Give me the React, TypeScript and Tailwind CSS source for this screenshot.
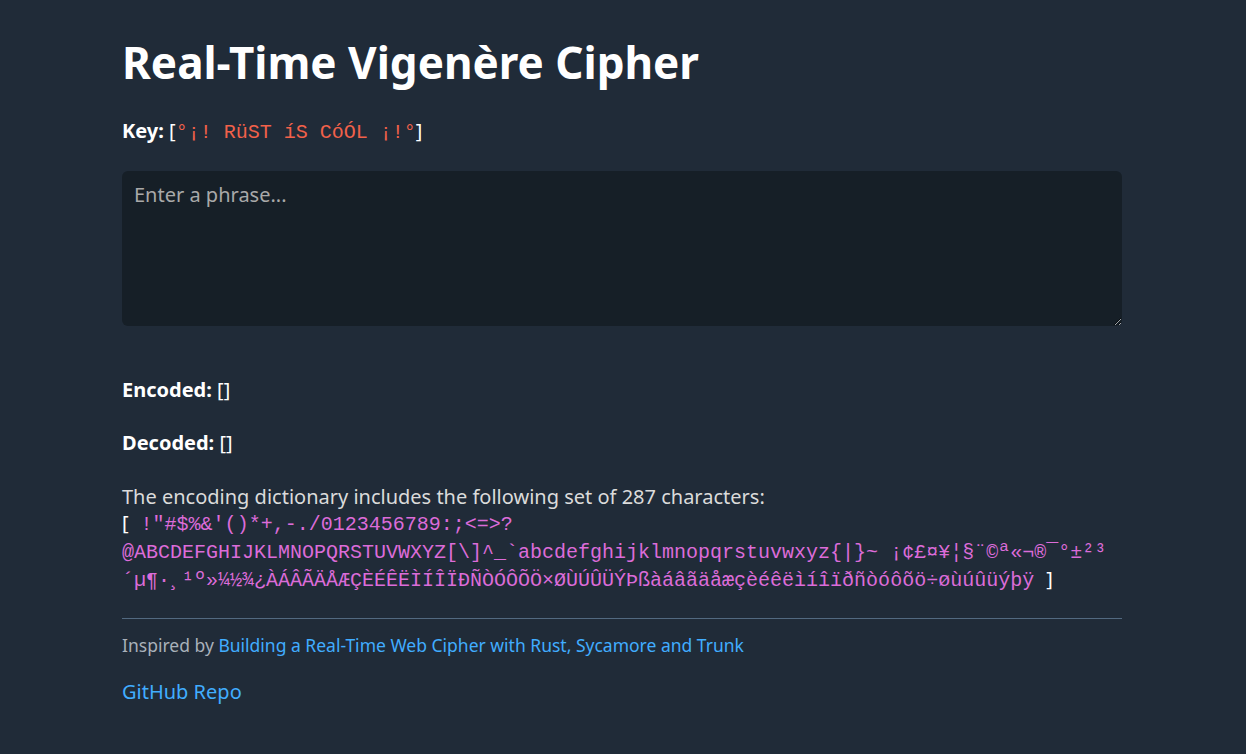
const DICTIONARY =
  ' !"#$%&\'()*+,-./0123456789:;<=>?@ABCDEFGHIJKLMNOPQRSTUVWXYZ[\\]^_`abcdefghijklmnopqrstuvwxyz{|}~\u00a0¡¢£¤¥¦§¨©ª«¬\u00ad®¯°±²³´µ¶·¸¹º»¼½¾¿ÀÁÂÃÄÅÆÇÈÉÊËÌÍÎÏÐÑÒÓÔÕÖ×ØÙÚÛÜÝÞßàáâãäåæçèéêëìíîïðñòóôõö÷øùúûüýþÿ';

const mono = "font-['Liberation_Mono',monospace] text-[20px]";

export default function App() {
  return (
    <div className="min-h-[754px] bg-[#202b38] font-['Noto_Sans',sans-serif] text-[20px] leading-[1.4] text-[#dbdbdb]">
      <main className="ml-[122px] w-[1000px] pt-[36px] pb-10">
        <h1 className="text-[44px] font-bold leading-[1.2] text-white">
          Real-Time Vigenère Cipher
        </h1>

        <p className="mt-[28px]">
          <strong className="font-bold text-white">Key:</strong>{' '}
          <span className="text-white">[</span>
          <span className={`${mono} text-[#f2614a]`}>°¡! RüST íS CóÓL ¡!°</span>
          <span className="text-white">]</span>
        </p>

        <textarea
          placeholder="Enter a phrase..."
          className="mt-[24px] block h-[155px] w-full rounded-[6px] bg-[#161f27] px-[12px] py-[10px] text-white outline-none placeholder:text-[#a9a9a9]"
        />

        <p className="mt-[50px]">
          <strong className="font-bold text-white">Encoded:</strong>{' '}
          <span className="text-white">[]</span>
        </p>

        <p className="mt-[25px]">
          <strong className="font-bold text-white">Decoded:</strong>{' '}
          <span className="text-white">[]</span>
        </p>

        <div className="mt-[27px] leading-[26px]">
          <div>The encoding dictionary includes the following set of 287 characters:</div>
          <div>
            <span className="text-white">[</span>
            <span className={`${mono} text-[#dc6cd9]`}> {DICTIONARY} </span>
            <span className="text-white">]</span>
          </div>
        </div>

        <hr className="mt-[24px] border-0 border-t border-[#526980]" />

        <p className="mt-[14px] text-[17.5px] text-[#a9b1ba]">
          Inspired by{' '}
          <a href="#" className="text-[#41adff]">
            Building a Real-Time Web Cipher with Rust, Sycamore and Trunk
          </a>
        </p>

        <p className="mt-[21px]">
          <a href="#" className="text-[#41adff]">
            GitHub Repo
          </a>
        </p>
      </main>
    </div>
  );
}
